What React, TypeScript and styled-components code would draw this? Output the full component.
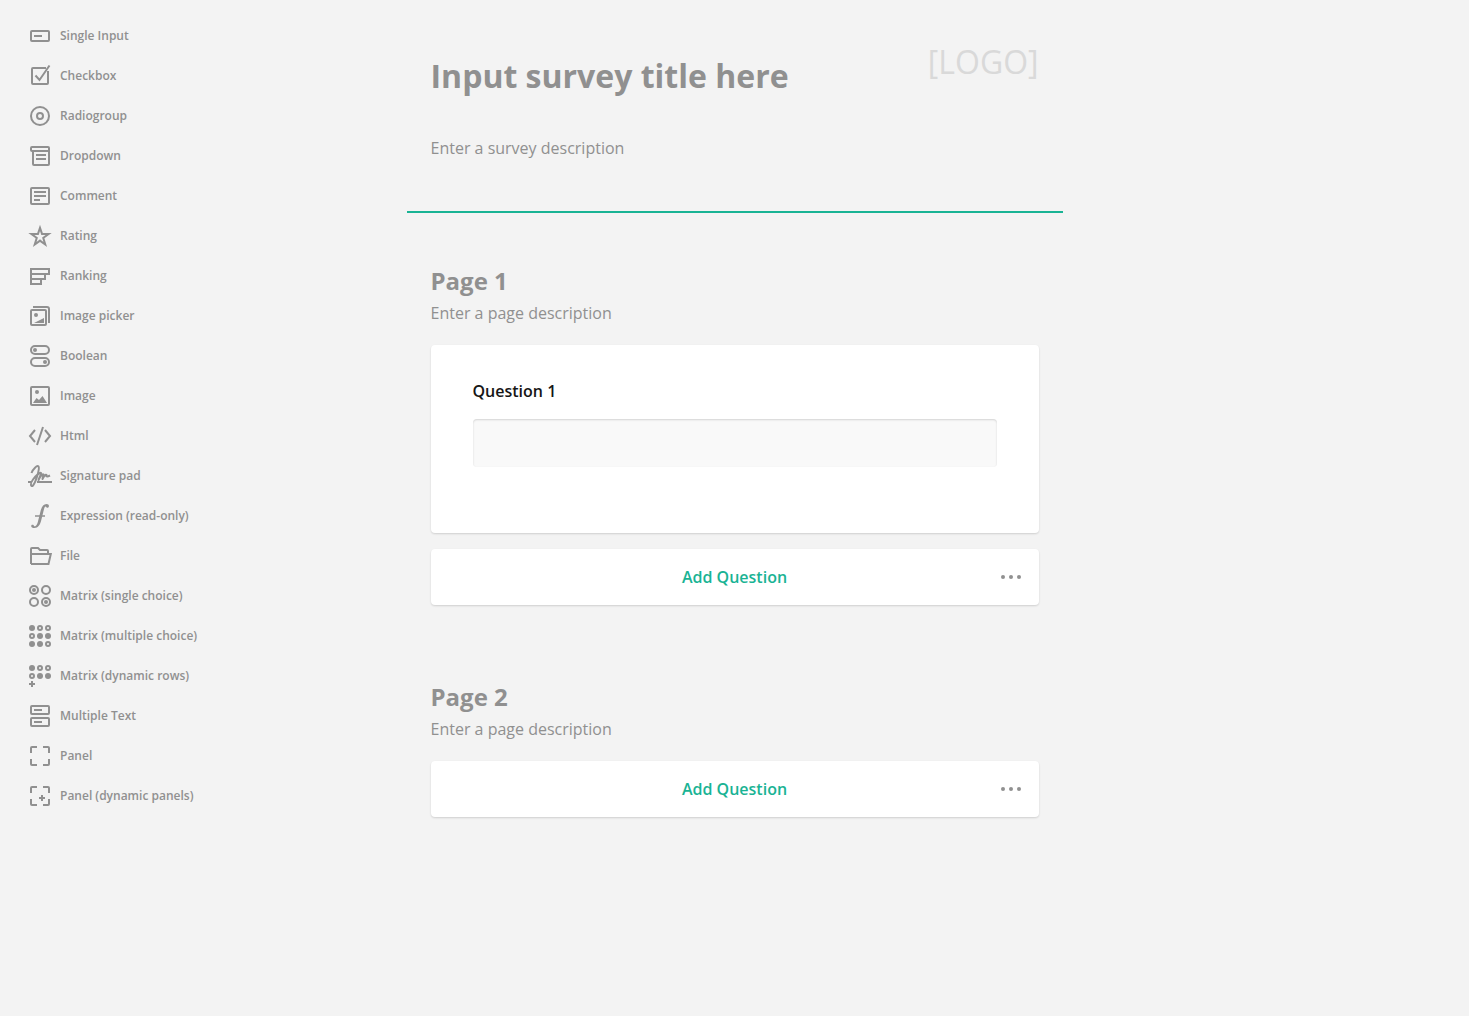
import React from "react";
import styled, { createGlobalStyle } from "styled-components";

const GlobalStyle = createGlobalStyle`
  *, *::before, *::after { box-sizing: border-box; }
  body {
    margin: 0;
    background: #f3f3f3;
    color: #909090;
    font-family: "Open Sans", "Noto Sans", sans-serif;
  }
`;

const Layout = styled.div`
  display: flex;
  min-height: 1016px;
  background: #f3f3f3;
`;

const Toolbox = styled.nav`
  flex: none;
  width: 406.5px;
  padding: 16px 0 0 28px;
`;

const ToolItem = styled.div`
  display: flex;
  align-items: center;
  gap: 8px;
  height: 40px;
  font-size: 12px;
  font-weight: 600;
  line-height: 16px;
  white-space: nowrap;
`;

const ToolLabel = styled.span`
  padding-bottom: 1px;
`;

const Icon = styled.svg`
  flex: none;
  display: block;
  width: 24px;
  height: 24px;
  fill: none;
  stroke: #909090;
  stroke-width: 2;

  .solid {
    fill: #909090;
    stroke: none;
  }
`;

const Survey = styled.main`
  flex: none;
  width: 656px;
`;

const Header = styled.header`
  display: flex;
  justify-content: space-between;
  height: 213px;
  padding: 0 24px;
  border-bottom: 2px solid #19b394;
`;

const Title = styled.h1`
  margin: 54px 0 0;
  font-size: 32px;
  font-weight: 700;
  line-height: 44px;
`;

const Description = styled.p<{ $top?: number }>`
  margin: ${(p) => p.$top ?? 0}px 0 0;
  font-size: 16px;
  line-height: 22px;
`;

const Logo = styled.div`
  margin-top: 40px;
  color: #d9d9d9;
  font-size: 32px;
  line-height: 44px;
`;

const Page = styled.section<{ $top: number }>`
  margin-top: ${(p) => p.$top}px;
  padding: 0 24px;
`;

const PageTitle = styled.h2`
  margin: 0 0 5px;
  font-size: 24px;
  font-weight: 700;
  line-height: 33px;
`;

const Card = styled.div`
  background: #fff;
  border-radius: 4px;
  box-shadow: 0 1px 2px rgba(0, 0, 0, 0.15);
`;

const QuestionCard = styled(Card)`
  height: 188px;
  margin: 21px 0 16px;
  padding: 35px 42px 0;
`;

const QuestionTitle = styled.div`
  color: #161616;
  font-size: 16px;
  font-weight: 600;
  line-height: 22px;
`;

const Field = styled.div`
  height: 48px;
  margin-top: 17px;
  background: #f9f9f9;
  border-radius: 4px;
  box-shadow: inset 0 1px 2px rgba(0, 0, 0, 0.15);
`;

const AddCard = styled(Card)<{ $top?: number }>`
  display: grid;
  grid-template-columns: 56px 1fr 56px;
  align-items: center;
  justify-items: center;
  height: 56px;
  margin-top: ${(p) => p.$top ?? 0}px;

  ${Icon} {
    margin-left: 0.5px;
    margin-right: -0.5px;
  }
`;

const AddLabel = styled.span`
  grid-column: 2;
  color: #19b394;
  font-size: 16px;
  font-weight: 600;
  line-height: 22px;
`;

const icons: Record<string, React.ReactNode> = {
  text: (
    <>
      <rect x="3" y="7" width="18" height="10" rx="1" />
      <path d="M6 12h8" />
    </>
  ),
  checkbox: (
    <>
      <path d="M18 4H5a1 1 0 0 0-1 1v14a1 1 0 0 0 1 1h14a1 1 0 0 0 1-1V7" />
      <path d="M7.500 11.500l4 4.500L21.500 1.500" />
    </>
  ),
  radio: (
    <>
      <circle cx="12" cy="12" r="9" />
      <circle cx="12" cy="12" r="3" />
    </>
  ),
  dropdown: (
    <>
      <path d="M5 7H4a1 1 0 0 1-1-1V4a1 1 0 0 1 1-1h16a1 1 0 0 1 1 1v16a1 1 0 0 1-1 1H6a1 1 0 0 1-1-1V7h16" />
      <path d="M8 11h10M8 15h10" />
    </>
  ),
  comment: (
    <>
      <rect x="3" y="4" width="18" height="16" rx="1" />
      <path d="M6 8h12M6 12h12M6 16h6" />
    </>
  ),
  rating: (
    <path
      className="solid"
      fillRule="evenodd"
      d="M12 .8l2.800 8.200H23.700l-7.300 5.300L19.100 23 12 17.900 4.900 23l2.700-8.700L.3 9h8.900zM12 6.900L10.700 11H6.400l3.500 2.600-1.300 4.300L12 15.300l3.400 2.600-1.300-4.300L17.600 11h-4.300z"
    />
  ),
  ranking: <path d="M3 5h18v5H3zM3 10h14v5H3zM3 15h10v5H3z" />,
  imagepicker: (
    <>
      <rect x="3" y="6" width="15" height="15" rx="1" />
      <path d="M5 3h14a2 2 0 0 1 2 2v14" />
      <circle className="solid" cx="8" cy="11" r="2" />
      <path className="solid" d="M6 19l10-5v5z" />
    </>
  ),
  boolean: (
    <>
      <rect x="3" y="2" width="18" height="8" rx="4" />
      <rect x="3" y="14" width="18" height="8" rx="4" />
      <circle className="solid" cx="7" cy="6" r="2" />
      <circle className="solid" cx="17" cy="18" r="2" />
    </>
  ),
  image: (
    <>
      <rect x="3" y="3" width="18" height="18" rx="1" />
      <circle className="solid" cx="9" cy="8" r="2" />
      <path className="solid" d="M5 19l3.500-5 2.500 2 3.500-4L19 19z" />
    </>
  ),
  html: <path d="M7 6l-5 6 5 6M17 6l5 6-5 6M15 3L9 21" />,
  signature: (
    <>
      <path d="M0 18h4M9 18h15" />
      <path
        strokeLinejoin="round"
        d="M3.500 9C5 5 9 1 10.500 2.500C12 4 8 18 5 21.500C3 23.500 1.500 20 5 15.500C8 11.500 12 8 13 9C13.500 10 11 14 10.500 16C12.500 12 14.500 9.500 15.500 10.500L14.500 15C16.500 11.500 18 10 18.500 11C18 13.500 20 12.500 22 11.500"
      />
    </>
  ),
  expression: (
    <>
      <path
        className="solid"
        d="M20.900 2.300c-.3 2-2.900 1.900-2.900.3-1-.2-1.600.8-2.100 3L13.300 16c-1.100 4.800-3.300 8-6.800 8-2 0-3.300-.8-3.300-2.100 0-1.600 2.500-1.800 2.900.3 2.300.5 3.300-2.200 4.100-5.700l2.300-9.200C13.600 2.800 15.500.1 18.500.1c1.600 0 2.600.9 2.400 2.200z"
      />
      <path d="M7 12h10" strokeWidth="1.500" />
    </>
  ),
  file: <path d="M3 20V5a1 1 0 0 1 1-1h6l2 2h7a1 1 0 0 1 1 1v3M3 20h17.500l2.300-10H3" />,
  matrixSingle: (
    <>
      {[6, 18].map((y) => [6, 18].map((x) => <circle key={`${x}-${y}`} cx={x} cy={y} r="4" />))}
      <circle className="solid" cx="6" cy="6" r="2" />
      <circle className="solid" cx="18" cy="18" r="2" />
    </>
  ),
  matrixMultiple: <Dots rows={["100", "011", "110"]} />,
  matrixDynamic: (
    <>
      <Dots rows={["100", "011"]} />
      <path d="M4 17v6M1 20h6" />
    </>
  ),
  multipleText: (
    <>
      <rect x="3" y="2" width="18" height="8" rx="1" />
      <rect x="3" y="14" width="18" height="8" rx="1" />
      <path d="M6 6h8M6 18h8" />
    </>
  ),
  panel: <Corners />,
  panelDynamic: (
    <>
      <Corners />
      <path d="M14 11v6M11 14h6" />
    </>
  ),
};

function Dots({ rows }: { rows: string[] }) {
  return (
    <>
      {rows.map((row, r) =>
        row.split("").map((cell, c) => (
          <circle
            key={`${r}-${c}`}
            className={cell === "1" ? "solid" : undefined}
            cx={4 + c * 8}
            cy={4 + r * 8}
            r={cell === "1" ? 3 : 2}
          />
        ))
      )}
    </>
  );
}

function Corners() {
  return <path d="M3 9V4a1 1 0 0 1 1-1h5M15 3h5a1 1 0 0 1 1 1v5M21 15v5a1 1 0 0 1-1 1h-5M9 21H4a1 1 0 0 1-1-1v-5" />;
}

const tools: [string, string][] = [
  ["text", "Single Input"],
  ["checkbox", "Checkbox"],
  ["radio", "Radiogroup"],
  ["dropdown", "Dropdown"],
  ["comment", "Comment"],
  ["rating", "Rating"],
  ["ranking", "Ranking"],
  ["imagepicker", "Image picker"],
  ["boolean", "Boolean"],
  ["image", "Image"],
  ["html", "Html"],
  ["signature", "Signature pad"],
  ["expression", "Expression (read-only)"],
  ["file", "File"],
  ["matrixSingle", "Matrix (single choice)"],
  ["matrixMultiple", "Matrix (multiple choice)"],
  ["matrixDynamic", "Matrix (dynamic rows)"],
  ["multipleText", "Multiple Text"],
  ["panel", "Panel"],
  ["panelDynamic", "Panel (dynamic panels)"],
];

function AddQuestion({ top }: { top?: number }) {
  return (
    <AddCard $top={top}>
      <AddLabel>Add Question</AddLabel>
      <Icon viewBox="0 0 24 24">
        <circle className="solid" cx="4" cy="12" r="2" />
        <circle className="solid" cx="12" cy="12" r="2" />
        <circle className="solid" cx="20" cy="12" r="2" />
      </Icon>
    </AddCard>
  );
}

export default function App() {
  return (
    <>
      <GlobalStyle />
      <Layout>
        <Toolbox>
          {tools.map(([icon, label]) => (
            <ToolItem key={icon}>
              <Icon viewBox="0 0 24 24">{icons[icon]}</Icon>
              <ToolLabel>{label}</ToolLabel>
            </ToolItem>
          ))}
        </Toolbox>
        <Survey>
          <Header>
            <div>
              <Title>Input survey title here</Title>
              <Description $top={39}>Enter a survey description</Description>
            </div>
            <Logo>[LOGO]</Logo>
          </Header>
          <Page $top={51}>
            <PageTitle>Page 1</PageTitle>
            <Description>Enter a page description</Description>
            <QuestionCard>
              <QuestionTitle>Question 1</QuestionTitle>
              <Field />
            </QuestionCard>
            <AddQuestion />
          </Page>
          <Page $top={75}>
            <PageTitle>Page 2</PageTitle>
            <Description>Enter a page description</Description>
            <AddQuestion top={21} />
          </Page>
        </Survey>
      </Layout>
    </>
  );
}
